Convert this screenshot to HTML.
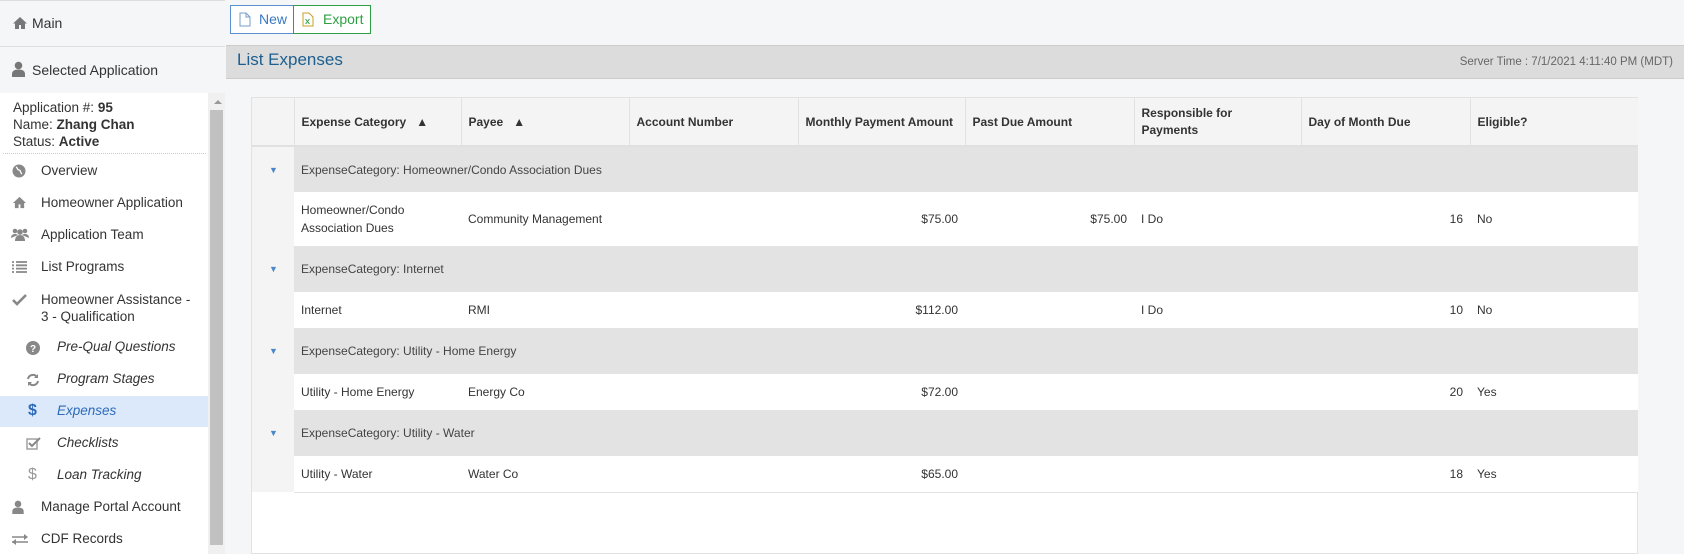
<!DOCTYPE html>
<html><head><style>
*{box-sizing:border-box;margin:0;padding:0}
body{width:1684px;height:554px;overflow:hidden;background:#f5f6f7;font-family:"Liberation Sans",sans-serif;color:#333;position:relative}
.abs{position:absolute}
.sb{left:0;top:0;width:225px;height:554px;border-right:1px solid #dcdcdc;background:#fff}
.sbh{position:absolute;left:0;width:225px;background:#f5f6f7;font-size:14px;color:#333;padding-left:32px}
.it{position:absolute;font-size:13.5px;color:#333;white-space:nowrap}
.ic{position:absolute}
.sub{font-style:italic}
table{border-collapse:collapse;table-layout:fixed}
td,th{font-size:12px;padding:0 7px;text-align:left;white-space:nowrap}
th{background:#f4f4f4;font-weight:bold;color:#333;border-left:1px solid #e2e2e2;height:48px;border-bottom:2px solid #e0e0e0}
tr.g td{background:#e3e3e3;height:46px;color:#444}
tr.g td.x{background:#f4f4f4;color:#4a86c8;font-size:9px;padding-left:17px}
tr.d td{background:#fff;border-bottom:1px solid #e3e3e3}
tr.d td.x{background:#f4f4f4;border-bottom:none}
.r{text-align:right}
</style></head><body>
<div class="abs sb">
 <div class="sbh" style="top:0;height:47px;line-height:45px;border-top:1px solid #ddd;border-bottom:1px solid #ddd">Main</div>
 <svg class="abs" style="left:12px;top:16px" width="16" height="14" viewBox="0 0 16 14"><path d="M8 1L1 7.5h2V13h4V9h2v4h4V7.5h2z" fill="#777"/></svg>
 <div class="sbh" style="top:47px;height:46px;line-height:46px">Selected Application</div>
 <svg class="abs" style="left:12px;top:61px" width="13" height="16" viewBox="0 0 13 16"><circle cx="6.5" cy="4.5" r="3.8" fill="#777"/><path d="M0 16v-3c0-3 2.5-4.5 6.5-4.5S13 10 13 13v3z" fill="#777"/></svg>
 <div class="abs" style="left:208px;top:93px;width:17px;height:461px;background:#f0f0f0"></div>
 <div class="abs" style="left:214px;top:100px;width:0;height:0;border-left:4px solid transparent;border-right:4px solid transparent;border-bottom:4px solid #999"></div>
 <div class="abs" style="left:210px;top:110px;width:13px;height:435px;background:#c1c1c1"></div>
 <div class="it" style="left:13px;top:99px;line-height:17px;font-size:13.5px">Application #: <b>95</b><br>Name: <b>Zhang Chan</b><br>Status: <b>Active</b></div>
 <div class="abs" style="left:3px;top:153px;width:203px;border-top:1px dotted #ccc"></div>
 <div class="abs" style="left:0;top:396px;width:208px;height:31px;background:#dbe9fb"></div>
 <svg class="ic" style="left:12px;top:164px" width="14" height="14" viewBox="0 0 14 14"><circle cx="7" cy="7" r="6.5" fill="#888"/><path d="M4 3c2 1 1 3 3 3s1 3 3 4" stroke="#fff" stroke-width="1.3" fill="none"/></svg>
 <div class="it" style="left:41px;top:163px">Overview</div>
 <svg class="ic" style="left:12px;top:196px" width="15" height="13" viewBox="0 0 16 14"><path d="M8 1L1 7.5h2V13h4V9h2v4h4V7.5h2z" fill="#888"/></svg>
 <div class="it" style="left:41px;top:195px">Homeowner Application</div>
 <svg class="ic" style="left:11px;top:228px" width="18" height="13" viewBox="0 0 18 13"><circle cx="4" cy="3" r="2.3" fill="#888"/><circle cx="14" cy="3" r="2.3" fill="#888"/><circle cx="9" cy="4" r="2.8" fill="#888"/><path d="M0 10c0-3 2-4 4-4s3 1 3 1M18 10c0-3-2-4-4-4s-3 1-3 1" fill="#888"/><path d="M4 13c0-4 2-6 5-6s5 2 5 6z" fill="#888"/></svg>
 <div class="it" style="left:41px;top:227px">Application Team</div>
 <svg class="ic" style="left:12px;top:261px" width="15" height="12" viewBox="0 0 15 12"><path d="M0 1h2M4 1h11M0 4.3h2M4 4.3h11M0 7.6h2M4 7.6h11M0 11h2M4 11h11" stroke="#888" stroke-width="1.8"/></svg>
 <div class="it" style="left:41px;top:259px">List Programs</div>
 <svg class="ic" style="left:12px;top:294px" width="15" height="12" viewBox="0 0 15 12"><path d="M1 6l4 4 9-9" stroke="#888" stroke-width="2.6" fill="none"/></svg>
 <div class="it" style="left:41px;top:291px;line-height:17px">Homeowner Assistance -<br>3 - Qualification</div>
 <svg class="ic" style="left:26px;top:341px" width="14" height="14" viewBox="0 0 14 14"><circle cx="7" cy="7" r="7" fill="#888"/><text x="7" y="11" font-size="10" font-weight="bold" fill="#fff" text-anchor="middle" font-family="Liberation Sans">?</text></svg>
 <div class="it sub" style="left:57px;top:339px">Pre-Qual Questions</div>
 <svg class="ic" style="left:26px;top:373px" width="14" height="14" viewBox="0 0 14 14"><path d="M2 6a5 5 0 0 1 9-2M12 8a5 5 0 0 1-9 2" stroke="#888" stroke-width="2" fill="none"/><path d="M12 1v4H8zM2 13V9h4z" fill="#888"/></svg>
 <div class="it sub" style="left:57px;top:371px">Program Stages</div>
 <div class="abs" style="left:28px;top:402px;color:#2d6ab8;font-weight:bold;font-size:16px">$</div><div class="it sub" style="left:57px;top:403px;color:#2d6ab8">Expenses</div>
 <svg class="ic" style="left:26px;top:436px" width="15" height="14" viewBox="0 0 15 14"><rect x="1" y="3" width="10" height="10" fill="none" stroke="#999" stroke-width="1.4"/><path d="M3 7l3 3 8-8" stroke="#888" stroke-width="2" fill="none"/></svg>
 <div class="it sub" style="left:57px;top:435px">Checklists</div>
 <div class="abs" style="left:28px;top:466px;color:#999;font-size:16px">$</div><div class="it sub" style="left:57px;top:467px">Loan Tracking</div>
 <svg class="ic" style="left:12px;top:500px" width="12" height="14" viewBox="0 0 13 16"><circle cx="6.5" cy="4.5" r="3.8" fill="#888"/><path d="M0 16v-3c0-3 2.5-4.5 6.5-4.5S13 10 13 13v3z" fill="#888"/></svg>
 <div class="it" style="left:41px;top:499px">Manage Portal Account</div>
 <svg class="ic" style="left:12px;top:534px" width="16" height="11" viewBox="0 0 16 11"><path d="M0 3h13M0 8h16" stroke="#888" stroke-width="1.6"/><path d="M12 0l4 3-4 3zM4 5L0 8l4 3z" fill="#888"/></svg>
 <div class="it" style="left:41px;top:531px">CDF Records</div>
</div>
<div class="abs" style="left:230px;top:5px;width:64px;height:29px;border:1px solid #5b8fd0;background:#fff;font-size:14px;color:#3a78c2;line-height:27px;padding-left:28px">New</div>
<svg class="abs" style="left:239px;top:12px" width="12" height="15" viewBox="0 0 12 15"><path d="M1 1h6l4 4v9H1z M7 1v4h4" fill="none" stroke="#7a9cc8"/></svg>
<div class="abs" style="left:293px;top:5px;width:78px;height:29px;border:1px solid #2ea043;background:#fff;font-size:14px;color:#2ea043;line-height:27px;padding-left:29px">Export</div>
<svg class="abs" style="left:302px;top:12px" width="12" height="15" viewBox="0 0 12 15"><path d="M1 1h6l4 4v9H1z" fill="none" stroke="#c8a020"/><path d="M3.5 7l4 5M7.5 7l-4 5" stroke="#2ea043"/></svg>
<div class="abs" style="left:226px;top:45px;width:1458px;height:34px;background:#dcdcdc;border-top:1px solid #ccc;border-bottom:1px solid #ccc"></div>
<div class="abs" style="left:237px;top:50px;font-size:17px;color:#1d5f8f">List Expenses</div>
<div class="abs" style="right:11px;top:56px;font-size:11.5px;color:#666;white-space:nowrap">Server Time : 7/1/2021 4:11:40 PM (MDT)</div>
<div class="abs" style="left:251px;top:97px;width:1387px;height:457px;background:#fff;border:1px solid #e2e2e2">
<table style="width:1386px">
<colgroup><col style="width:42px"><col style="width:167px"><col style="width:168px"><col style="width:169px"><col style="width:167px"><col style="width:169px"><col style="width:167px"><col style="width:169px"><col style="width:168px"></colgroup>
<tr><th style="border-left:none"></th><th>Expense Category &nbsp;&nbsp;▲</th><th>Payee &nbsp;&nbsp;▲</th><th>Account Number</th><th>Monthly Payment Amount</th><th>Past Due Amount</th><th style="line-height:17px">Responsible for<br>Payments</th><th>Day of Month Due</th><th>Eligible?</th></tr>
<tr class="g"><td class="x">▼</td><td colspan="8">ExpenseCategory: Homeowner/Condo Association Dues</td></tr>
<tr class="d" style="height:54px"><td class="x"></td><td style="line-height:18px">Homeowner/Condo<br>Association Dues</td><td>Community Management</td><td></td><td class="r">$75.00</td><td class="r">$75.00</td><td>I Do</td><td class="r">16</td><td>No</td></tr>
<tr class="g"><td class="x">▼</td><td colspan="8">ExpenseCategory: Internet</td></tr>
<tr class="d" style="height:36px"><td class="x"></td><td>Internet</td><td>RMI</td><td></td><td class="r">$112.00</td><td></td><td>I Do</td><td class="r">10</td><td>No</td></tr>
<tr class="g"><td class="x">▼</td><td colspan="8">ExpenseCategory: Utility - Home Energy</td></tr>
<tr class="d" style="height:36px"><td class="x"></td><td>Utility - Home Energy</td><td>Energy Co</td><td></td><td class="r">$72.00</td><td></td><td></td><td class="r">20</td><td>Yes</td></tr>
<tr class="g"><td class="x">▼</td><td colspan="8">ExpenseCategory: Utility - Water</td></tr>
<tr class="d" style="height:36px"><td class="x"></td><td>Utility - Water</td><td>Water Co</td><td></td><td class="r">$65.00</td><td></td><td></td><td class="r">18</td><td>Yes</td></tr>
</table>
</div>
</body></html>
